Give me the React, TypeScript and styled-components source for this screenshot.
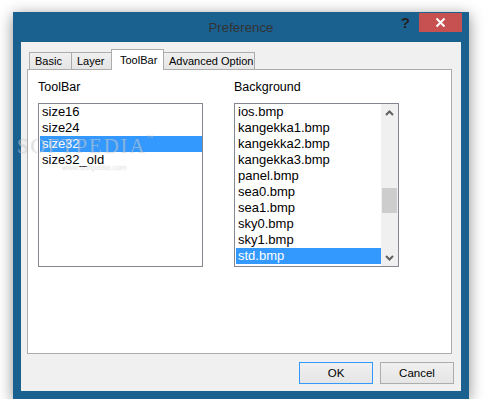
import React from "react";
import styled, { createGlobalStyle } from "styled-components";

const toolbarSizes = ["size16", "size24", "size32", "size32_old"];
const backgrounds = [
  "ios.bmp",
  "kangekka1.bmp",
  "kangekka2.bmp",
  "kangekka3.bmp",
  "panel.bmp",
  "sea0.bmp",
  "sea1.bmp",
  "sky0.bmp",
  "sky1.bmp",
  "std.bmp",
];

const tabs = [
  { label: "Basic", width: 43 },
  { label: "Layer", width: 41 },
  { label: "ToolBar", width: 53 },
  { label: "Advanced Option", width: 92 },
];

const GlobalStyle = createGlobalStyle`
  body {
    margin: 0;
    background: #ffffff;
    font-family: "Liberation Sans", Arial, sans-serif;
  }
`;

const App: React.FC = () => {
  return (
    <>
      <GlobalStyle />
      <Page>
        <Window>
          <TitleBar>
            <div />
            <Title>Preference</Title>
            <Controls>
              <Help>?</Help>
              <CloseButton>
                <svg width="11" height="11" viewBox="0 0 11 11">
                  <path d="M1.5 1.5 L9.5 9.5 M9.5 1.5 L1.5 9.5" stroke="#ffffff" strokeWidth="2" />
                </svg>
              </CloseButton>
            </Controls>
          </TitleBar>

          <Client>
            <TabStrip>
              {tabs.map((t) => (
                <Tab key={t.label} $active={t.label === "ToolBar"} $width={t.width}>
                  {t.label}
                </Tab>
              ))}
            </TabStrip>

            <Panel>
              <Column>
                <Label>ToolBar</Label>
                <ListBox>
                  <Items>
                    {toolbarSizes.map((s) => (
                      <Item key={s} $selected={s === "size32"}>
                        {s}
                      </Item>
                    ))}
                  </Items>
                </ListBox>
              </Column>
              <Column>
                <Label>Background</Label>
                <ListBox>
                  <Items>
                    {backgrounds.map((b) => (
                      <Item key={b} $selected={b === "std.bmp"}>
                        {b}
                      </Item>
                    ))}
                  </Items>
                  <ScrollBar>
                    <ArrowCell>
                      <svg width="9" height="6" viewBox="0 0 9 6">
                        <path d="M1 5 L4.5 1.5 L8 5" fill="none" stroke="#606060" strokeWidth="2" />
                      </svg>
                    </ArrowCell>
                    <Track>
                      <Thumb />
                    </Track>
                    <ArrowCell>
                      <svg width="9" height="6" viewBox="0 0 9 6">
                        <path d="M1 1 L4.5 4.5 L8 1" fill="none" stroke="#606060" strokeWidth="2" />
                      </svg>
                    </ArrowCell>
                  </ScrollBar>
                </ListBox>
              </Column>
            </Panel>

            <ButtonRow>
              <DialogButton $default>OK</DialogButton>
              <DialogButton>Cancel</DialogButton>
            </ButtonRow>
          </Client>

          <Watermark>
            <Brand>
              SOFTPEDIA<sup>™</sup>
            </Brand>
            <Site>www.softpedia.com</Site>
          </Watermark>
        </Window>
      </Page>
    </>
  );
};

const Page = styled.div`
  padding: 12px 0 0 13px;
`;

const Window = styled.div`
  position: relative;
  width: 456px;
  height: 387px;
  box-sizing: border-box;
  padding: 0 8px 8px;
  background: #1b6190;
  box-shadow: 0 3px 14px rgba(0, 0, 0, 0.45);
  display: flex;
  flex-direction: column;
`;

const TitleBar = styled.div`
  height: 30px;
  display: grid;
  grid-template-columns: 1fr auto 1fr;
`;

const Title = styled.div`
  align-self: center;
  font-size: 13.3px;
  color: #333333;
`;

const Controls = styled.div`
  display: flex;
  justify-content: flex-end;
  align-items: flex-start;
  margin-right: -1px;
`;

const Help = styled.div`
  margin-top: 3px;
  margin-right: 9px;
  font-size: 15px;
  font-weight: bold;
  color: #222222;
  line-height: 16px;
`;

const CloseButton = styled.div`
  margin-top: 1px;
  width: 43px;
  height: 19px;
  background: #c75050;
  display: flex;
  align-items: center;
  justify-content: center;
`;

const Client = styled.div`
  flex: 1;
  background: #f0f0f0;
  padding: 7px 7px 7px 6px;
  display: flex;
  flex-direction: column;
`;

const TabStrip = styled.div`
  height: 20px;
  padding-left: 2px;
  display: flex;
  align-items: flex-end;
`;

const Tab = styled.div<{ $active?: boolean; $width: number }>`
  position: relative;
  z-index: ${(p) => (p.$active ? 1 : 0)};
  box-sizing: border-box;
  width: ${(p) => p.$width}px;
  height: ${(p) => (p.$active ? 21 : 17)}px;
  margin-left: -1px;
  margin-bottom: ${(p) => (p.$active ? -1 : 0)}px;
  padding: ${(p) => (p.$active ? "0 0 1px 8px" : "0 0 0 5px")};
  border: 1px solid #acacac;
  border-bottom: none;
  background: ${(p) =>
    p.$active ? "#ffffff" : "linear-gradient(#f0f0f0, #e5e5e5)"};
  font-size: 11px;
  color: #000000;
  display: flex;
  align-items: center;
  white-space: nowrap;

  &:first-child {
    margin-left: 0;
  }
`;

const Panel = styled.div`
  height: 285px;
  margin-right: 2px;
  box-sizing: border-box;
  border: 1px solid #acacac;
  background: #ffffff;
  padding: 9px 0 0 10px;
  display: grid;
  grid-template-columns: 165px 165px;
  column-gap: 31px;
  align-content: start;
`;

const Column = styled.div`
  display: flex;
  flex-direction: column;
`;

const Label = styled.div`
  font-size: 12.5px;
  line-height: 16px;
  height: 16px;
  margin-bottom: 8px;
  color: #000000;
`;

const ListBox = styled.div`
  box-sizing: border-box;
  height: 164px;
  border: 1px solid #828790;
  background: #ffffff;
  display: flex;
`;

const Items = styled.div`
  flex: 1;
  padding: 0 0 0 1px;
`;

const Item = styled.div<{ $selected?: boolean }>`
  height: 16px;
  line-height: 16px;
  padding-left: 2px;
  font-size: 13px;
  background: ${(p) => (p.$selected ? "#3399ff" : "transparent")};
  color: ${(p) => (p.$selected ? "#ffffff" : "#000000")};
  white-space: nowrap;
`;

const ScrollBar = styled.div`
  width: 17px;
  background: #f0f0f0;
  display: flex;
  flex-direction: column;
`;

const ArrowCell = styled.div`
  height: 17px;
  display: flex;
  align-items: center;
  justify-content: center;
`;

const Track = styled.div`
  flex: 1;
  padding-top: 67px;
  display: flex;
  justify-content: center;
`;

const Thumb = styled.div`
  width: 15px;
  height: 25px;
  background: #cdcdcd;
`;

const ButtonRow = styled.div`
  margin-top: 8px;
  display: flex;
  justify-content: flex-end;
  gap: 7px;
`;

const DialogButton = styled.div<{ $default?: boolean }>`
  box-sizing: border-box;
  width: 74px;
  height: 22px;
  border: 1px solid ${(p) => (p.$default ? "#3399ff" : "#adadad")};
  background: linear-gradient(#f0f0f0, #e5e5e5);
  font-size: 11.5px;
  color: #000000;
  display: flex;
  align-items: center;
  justify-content: center;
`;

const Watermark = styled.div`
  position: absolute;
  left: 4px;
  top: 122px;
  pointer-events: none;
  display: flex;
  flex-direction: column;
`;

const Brand = styled.div`
  font-family: "Liberation Serif", "Times New Roman", serif;
  font-size: 21px;
  letter-spacing: 1.8px;
  color: rgba(255, 255, 255, 0.35);
  text-shadow: 0 0 1px rgba(120, 120, 120, 0.35);

  sup {
    font-size: 7px;
    letter-spacing: 0;
    vertical-align: top;
  }
`;

const Site = styled.div`
  margin: 4px 0 0 45px;
  font-size: 7.5px;
  color: rgba(255, 255, 255, 0.3);
  text-shadow: 0 0 1px rgba(120, 120, 120, 0.3);
`;

export default App;
